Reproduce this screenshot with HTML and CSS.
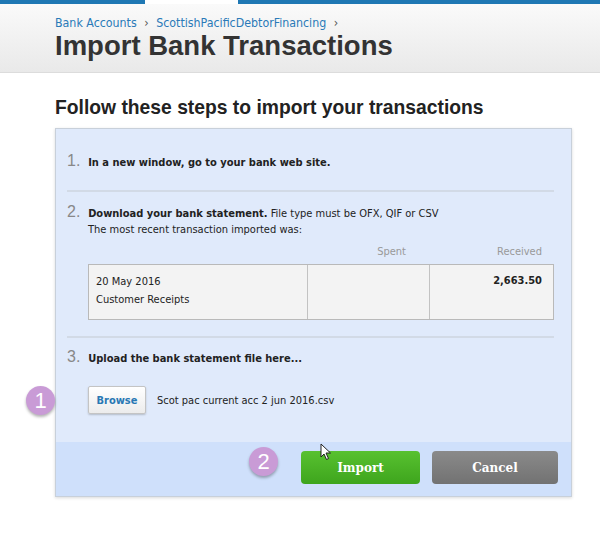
FILE: index.html
```html
<!DOCTYPE html>
<html lang="en">
<head>
  <meta charset="UTF-8">
  <title>Import Bank Transactions</title>
  <link rel="stylesheet" href="styles.css">
</head>
<body>
  <div class="topbar">
    <div class="bar-left"></div>
    <div class="bar-gap"></div>
    <div class="bar-right"></div>
  </div>

  <div class="page-header">
    <div class="breadcrumb">
      <a href="#">Bank Accounts</a> <span class="sep">›</span>
      <a href="#">ScottishPacificDebtorFinancing</a> <span class="sep">›</span>
    </div>
    <h1>Import Bank Transactions</h1>
  </div>

  <div class="content">
    <h2>Follow these steps to import your transactions</h2>

    <div class="panel">
      <div class="steps">
        <div class="step">
          <div class="step-title"><span class="num">1.</span> <b>In a new window, go to your bank web site.</b></div>
        </div>

        <div class="step">
          <div class="step-title"><span class="num">2.</span> <b>Download your bank statement.</b> File type must be OFX, QIF or CSV</div>
          <div class="step-body">
            <div class="note">The most recent transaction imported was:</div>
            <div class="tx-head">
              <div class="col-desc"></div>
              <div class="col-amt spent">Spent</div>
              <div class="col-amt">Received</div>
            </div>
            <div class="tx-row">
              <div class="col-desc">20 May 2016<br>Customer Receipts</div>
              <div class="col-amt"></div>
              <div class="col-amt"><b>2,663.50</b></div>
            </div>
          </div>
        </div>

        <div class="step last">
          <div class="step-title"><span class="num">3.</span> <b>Upload the bank statement file here...</b></div>
          <div class="upload">
            <button class="browse">Browse</button>
            <span class="filename">Scot pac current acc 2 jun 2016.csv</span>
          </div>
        </div>
      </div>

      <div class="panel-footer">
        <button class="btn btn-import">Import</button>
        <button class="btn btn-cancel">Cancel</button>
      </div>
    </div>
  </div>

  <!-- tutorial markers -->
  <div class="marker marker-1">1</div>
  <div class="marker marker-2">2</div>
  <svg class="cursor" width="12" height="18" viewBox="0 0 12 18">
    <path d="M1 1 L1 14 L4 11 L6.5 16.5 L8.5 15.5 L6 10 L10.5 10 Z" fill="#fff" stroke="#222" stroke-width="1"/>
  </svg>
</body>
</html>
```

FILE: styles.css
```css
* {
  box-sizing: border-box;
  margin: 0;
  padding: 0;
}

body {
  background-color: #fff;
  font-family: "DejaVu Sans Condensed", "DejaVu Sans", sans-serif;
  font-size: 11px;
  color: #222;
  position: relative;
  height: 543px;
  overflow: hidden;
}

.topbar {
  display: flex;
  height: 4px;
}

.bar-left {
  width: 145px;
  background-color: #1f78b4;
}

.bar-gap {
  width: 93px;
  background-color: #fff;
}

.bar-right {
  flex: 1;
  background-color: #1f78b4;
}

.page-header {
  height: 69px;
  padding: 12px 0 0 55px;
  background: linear-gradient(#fafafa, #e9e9e9);
  border-bottom: 1px solid #dcdcdc;
}

.breadcrumb {
  font-size: 12.3px;
  color: #555;
}

.breadcrumb a {
  color: #2a7ab8;
  text-decoration: none;
}

.breadcrumb .sep {
  margin: 0 4px;
  color: #555;
}

h1 {
  font-family: "Liberation Sans", Arial, sans-serif;
  font-size: 27.5px;
  font-weight: bold;
  color: #333;
  line-height: 32px;
}

.content {
  padding: 24px 0 0 55px;
  width: 572px;
}

h2 {
  font-family: "Liberation Sans", Arial, sans-serif;
  font-size: 19.3px;
  font-weight: bold;
  color: #222;
  margin-bottom: 9px;
}

.panel {
  background-color: #e0eafb;
  border: 1px solid #c8d0da;
  box-shadow: 0 1px 3px rgba(0, 0, 0, 0.15);
}

.steps {
  padding: 0 17px 0 11px;
}

.step {
  border-bottom: 2px solid #d2dae6;
  padding: 23px 0 20px;
}

.step + .step {
  padding-top: 11px;
  padding-bottom: 16px;
}

.step.last {
  border-bottom: none;
  padding-top: 10px;
  padding-bottom: 28px;
}

.step-title {
  font-size: 11px;
}

.num {
  font-family: "Liberation Sans", Arial, sans-serif;
  font-size: 16px;
  color: #888;
  display: inline-block;
  width: 18px;
}

.step-body {
  padding-left: 21px;
}

.note {
  margin-top: 2px;
}

.tx-head {
  display: flex;
  color: #999;
  margin-top: 6px;
  height: 22px;
  padding-top: 3px;
}

.col-desc {
  width: 218px;
  padding: 8px 7px;
  line-height: 18px;
}

.tx-head .col-desc {
  padding: 0;
}

.col-amt {
  width: 122px;
  text-align: right;
  padding: 0 8px;
}

.tx-head .spent {
  padding-right: 22px;
}

.tx-row {
  display: flex;
  background-color: #f3f3f3;
  border: 1px solid #b9b9b9;
  height: 56px;
}

.tx-row .col-amt {
  border-left: 1px solid #c2c2c2;
  padding-top: 9px;
  padding-right: 9px;
}

.upload {
  display: flex;
  align-items: center;
  gap: 11px;
  margin-top: 20px;
  padding-left: 21px;
}

.browse {
  width: 58px;
  height: 28px;
  font-family: "DejaVu Sans Condensed", "DejaVu Sans", sans-serif;
  font-size: 11px;
  font-weight: bold;
  color: #2878b4;
  background: linear-gradient(#ffffff, #ececec);
  border: 1px solid #c4c4c4;
  border-radius: 2px;
  box-shadow: 0 1px 2px rgba(0, 0, 0, 0.2);
}

.panel-footer {
  display: flex;
  justify-content: flex-end;
  gap: 12px;
  background-color: #cfe0fb;
  padding: 9px 13px 11px 0;
  height: 54px;
}

.btn {
  height: 33px;
  border: none;
  border-radius: 4px;
  font-family: "DejaVu Serif", "Liberation Serif", serif;
  font-size: 12px;
  font-weight: bold;
  color: #fff;
}

.btn-import {
  width: 119px;
  background: linear-gradient(#58c130, #3ea51d);
}

.btn-cancel {
  width: 126px;
  background: linear-gradient(#8a8a8a, #727272);
}

.marker {
  position: absolute;
  width: 29px;
  height: 29px;
  border-radius: 50%;
  background-color: #c99bd6;
  color: #fff;
  font-family: "Liberation Sans", Arial, sans-serif;
  font-size: 22px;
  line-height: 29px;
  text-align: center;
  box-shadow: 0 2px 3px rgba(0, 0, 0, 0.3);
}

.marker-1 {
  left: 26px;
  top: 386px;
}

.marker-2 {
  left: 249px;
  top: 447px;
}

.cursor {
  position: absolute;
  left: 320px;
  top: 443px;
}
```
